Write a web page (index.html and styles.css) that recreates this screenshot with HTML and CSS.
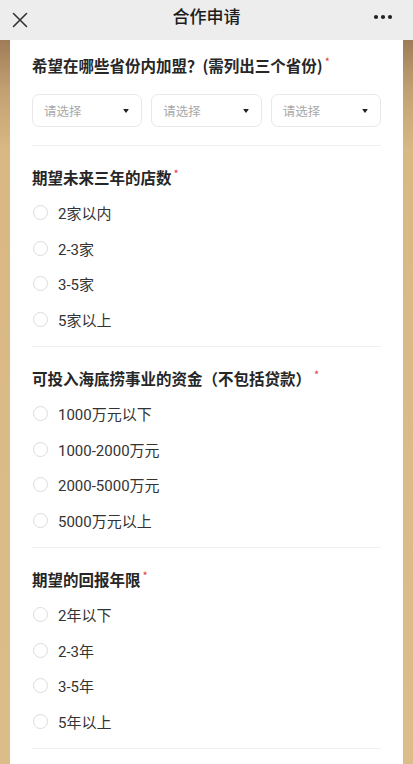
FILE: index.html
```html
<!DOCTYPE html>
<html lang="zh">
<head>
<meta charset="utf-8">
<title>合作申请</title>
<link rel="stylesheet" href="styles.css">
</head>
<body>
<header class="nav">
  <svg class="nav-close" width="16" height="16" viewBox="0 0 16 16"><path d="M1.5 1.5 L14.5 14.5 M14.5 1.5 L1.5 14.5" stroke="#333" stroke-width="1.6" fill="none" stroke-linecap="round"/></svg>
  <div class="nav-title">合作申请</div>
  <svg class="nav-more" width="20" height="6" viewBox="0 0 20 6"><circle cx="3" cy="3" r="2.1" fill="#222"/><circle cx="10" cy="3" r="2.1" fill="#222"/><circle cx="17" cy="3" r="2.1" fill="#222"/></svg>
</header>
<main class="card">
  <section class="q q-first">
    <h2 class="q-title">希望在哪些省份内加盟？(需列出三个省份)<span class="req">*</span></h2>
    <div class="selects">
      <div class="select"><span>请选择</span><i class="caret"></i></div>
      <div class="select"><span>请选择</span><i class="caret"></i></div>
      <div class="select"><span>请选择</span><i class="caret"></i></div>
    </div>
  </section>
  <section class="q">
    <h2 class="q-title">期望未来三年的店数<span class="req">*</span></h2>
    <ul class="opts">
      <li class="opt"><span class="radio"></span>2家以内</li>
      <li class="opt"><span class="radio"></span>2-3家</li>
      <li class="opt"><span class="radio"></span>3-5家</li>
      <li class="opt"><span class="radio"></span>5家以上</li>
    </ul>
  </section>
  <section class="q">
    <h2 class="q-title">可投入海底捞事业的资金（不包括贷款）<span class="req req-gap">*</span></h2>
    <ul class="opts">
      <li class="opt"><span class="radio"></span>1000万元以下</li>
      <li class="opt"><span class="radio"></span>1000-2000万元</li>
      <li class="opt"><span class="radio"></span>2000-5000万元</li>
      <li class="opt"><span class="radio"></span>5000万元以上</li>
    </ul>
  </section>
  <section class="q">
    <h2 class="q-title">期望的回报年限<span class="req">*</span></h2>
    <ul class="opts">
      <li class="opt"><span class="radio"></span>2年以下</li>
      <li class="opt"><span class="radio"></span>2-3年</li>
      <li class="opt"><span class="radio"></span>3-5年</li>
      <li class="opt"><span class="radio"></span>5年以上</li>
    </ul>
  </section>
  <div class="tail"></div>
</main>
</body>
</html>
```
FILE: styles.css
```css
* { box-sizing: border-box; }
html, body { margin: 0; padding: 0; }
body {
  font-family: "Noto Sans CJK SC", "Noto Sans", sans-serif;
  background: linear-gradient(180deg, #9f7c58 40px, #c3a072 90px, #d9b884 150px, #dcbd89 100%);
  min-height: 764px;
  color: #333;
}
.nav {
  height: 40px;
  background: #ededed;
  display: flex;
  align-items: center;
  justify-content: space-between;
  padding: 0 20px 0 12px;
  position: relative;
}
.nav-close { display: block; margin-top: -1px; }
.nav-title {
  position: absolute;
  left: 0; right: 0;
  text-align: center;
  font-size: 17px;
  font-weight: 500;
  color: #1c1c1c;
  line-height: 32px;
  top: 0;
}
.nav-more { display: block; margin-top: -7px; }
.card {
  margin: 0 10px;
  background: #fff;
  padding: 0 22px;
  min-height: 724px;
}
.q {
  padding: 20px 0 9px;
  border-bottom: 1px solid #efefef;
}
.q-first { padding: 14px 0 18px; }
.q-title {
  margin: 0 0 7px;
  font-size: 15.5px;
  line-height: 22px;
  height: 22px;
  font-weight: 700;
  color: #262626;
  white-space: nowrap;
}
.q-first .q-title { margin-bottom: 18px; }
.req {
  color: #e23a3a;
  font-size: 11px;
  font-weight: 400;
  line-height: 14px;
  vertical-align: top;
  margin-left: 2px;
}
.req-gap { margin-left: 3px; }
.selects {
  display: flex;
  gap: 9px;
}
.select {
  flex: 1;
  height: 33px;
  border: 1px solid #e8e8e8;
  border-radius: 7px;
  display: flex;
  align-items: center;
  justify-content: space-between;
  padding: 0 12px 0 11px;
  font-size: 12.5px;
  color: #a9a9a9;
}
.caret {
  width: 0; height: 0;
  border-left: 3.5px solid transparent;
  border-right: 3.5px solid transparent;
  border-top: 4.5px solid #222;
  border-radius: 1px;
}
.opts { list-style: none; margin: 0; padding: 0; }
.opt {
  height: 35.5px;
  display: flex;
  align-items: center;
  font-family: Roboto, "Noto Sans CJK SC", sans-serif;
  font-size: 15px;
  color: #333;
}
.radio {
  width: 15px; height: 15px;
  border: 1.5px solid #dcdcdc;
  border-radius: 50%;
  margin: 0 10px 0 1px;
  flex: none;
}
.tail { height: 20px; }
```
